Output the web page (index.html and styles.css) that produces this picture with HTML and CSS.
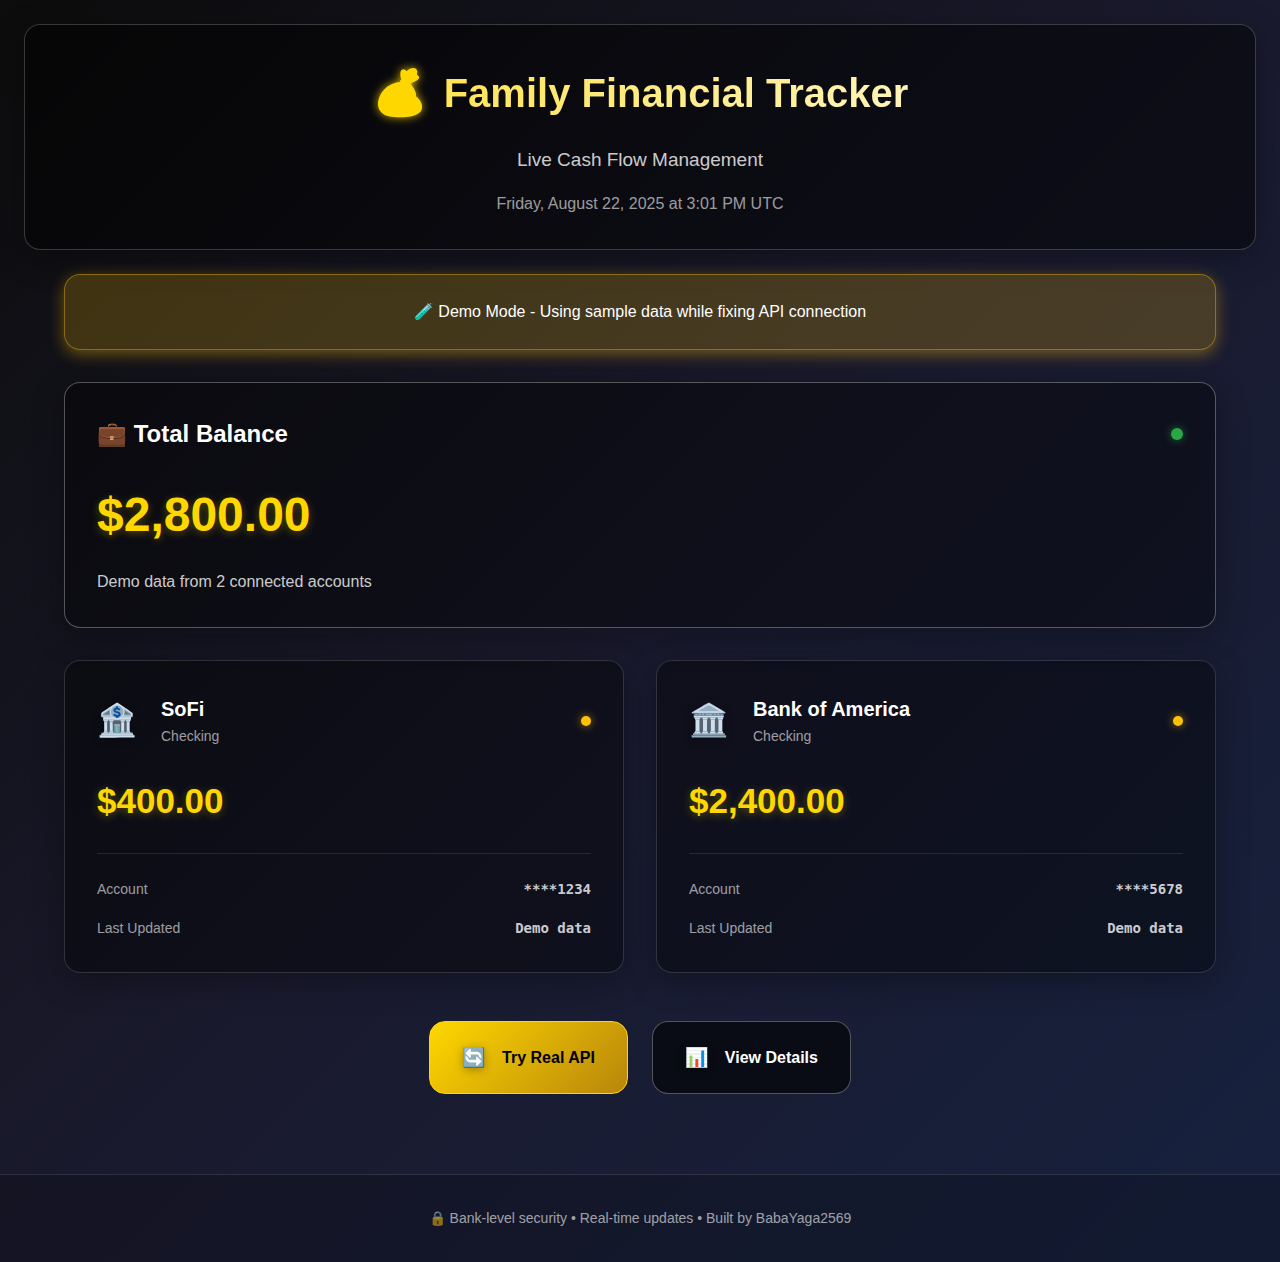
FILE: index.html
```html
<!DOCTYPE html>
<html lang="en">
<head>
<meta charset="utf-8">
<title>Family Financial Tracker</title>
<link rel="stylesheet" href="styles.css">
</head>
<body>
<header class="hero">
  <h1 class="title"><span class="bag">💰</span><span>Family Financial Tracker</span></h1>
  <p class="tagline">Live Cash Flow Management</p>
  <p class="date">Friday, August 22, 2025 at 3:01 PM UTC</p>
</header>
<main class="main">
  <div class="notice">🧪 Demo Mode - Using sample data while fixing API connection</div>
  <section class="card total">
    <div class="total-head"><h2>💼 Total Balance</h2><span class="dot ok"></span></div>
    <div class="amount big">$2,800.00</div>
    <p class="note">Demo data from 2 connected accounts</p>
  </section>
  <div class="accounts">
    <section class="card account">
      <div class="bank"><span class="bank-icon">🏦</span><div class="bank-name"><h3>SoFi</h3><p>Checking</p></div><span class="dot wait"></span></div>
      <div class="amount">$400.00</div>
      <dl class="details"><div><dt>Account</dt><dd>****1234</dd></div><div><dt>Last Updated</dt><dd>Demo data</dd></div></dl>
    </section>
    <section class="card account">
      <div class="bank"><span class="bank-icon">🏛️</span><div class="bank-name"><h3>Bank of America</h3><p>Checking</p></div><span class="dot wait"></span></div>
      <div class="amount">$2,400.00</div>
      <dl class="details"><div><dt>Account</dt><dd>****5678</dd></div><div><dt>Last Updated</dt><dd>Demo data</dd></div></dl>
    </section>
  </div>
  <div class="actions">
    <button class="btn primary" type="button"><span class="btn-icon">🔄</span>Try Real API</button>
    <button class="btn" type="button"><span class="btn-icon">📊</span>View Details</button>
  </div>
</main>
<footer class="footer"><p>🔒 Bank-level security • Real-time updates • Built by BabaYaga2569</p></footer>
</body>
</html>
```
FILE: styles.css
```css
* { box-sizing: border-box; margin: 0; padding: 0; }
body {
  min-height: 100vh;
  font-family: "Liberation Sans", Arial, sans-serif;
  font-size: 16px;
  line-height: 26px;
  color: #fff;
  background: linear-gradient(135deg, #0c0c0c 0%, #1a1a2e 50%, #16213e 100%);
}
.hero {
  margin: 24px;
  padding: 32px;
  text-align: center;
  border: 1px solid rgba(255, 255, 255, 0.2);
  border-radius: 16px;
  background: rgba(0, 0, 0, 0.5);
  box-shadow: 0 8px 32px rgba(0, 0, 0, 0.3);
}
.title {
  display: flex;
  justify-content: center;
  align-items: center;
  gap: 16px;
  margin-bottom: 16px;
  font-size: 40px;
  line-height: 72px;
  background: linear-gradient(135deg, #ffd700, #fff);
  -webkit-background-clip: text;
  background-clip: text;
  -webkit-text-fill-color: transparent;
}
.bag {
  font-size: 45px;
  background: #ffd700;
  -webkit-background-clip: text;
  background-clip: text;
  filter: drop-shadow(0 0 5px rgba(255, 215, 0, 0.8));
}
.tagline { margin-bottom: 16px; font-size: 19px; line-height: 30px; color: rgba(255, 255, 255, 0.8); }
.date { color: rgba(255, 255, 255, 0.6); }
.main { max-width: 1200px; margin: 0 auto; padding: 0 24px; }
.notice {
  padding: 24px;
  margin-bottom: 32px;
  text-align: center;
  border: 1px solid rgba(255, 193, 7, 0.4);
  border-radius: 16px;
  background: rgba(255, 193, 7, 0.2);
  box-shadow: 0 4px 16px rgba(255, 193, 7, 0.4);
}
.card {
  padding: 32px;
  border: 1px solid rgba(255, 255, 255, 0.15);
  border-radius: 16px;
  background: rgba(0, 0, 0, 0.4);
  box-shadow: 0 8px 32px rgba(0, 0, 0, 0.3);
}
.total { border-color: rgba(255, 255, 255, 0.3); margin-bottom: 32px; }
.total-head { display: flex; justify-content: space-between; align-items: center; margin-bottom: 24px; }
h2 { font-size: 24px; line-height: 38px; }
.dot { width: 10px; height: 10px; border-radius: 50%; }
.ok { width: 12px; height: 12px; background: #28a745; box-shadow: 0 0 8px rgba(40, 167, 69, 0.6); }
.wait { background: #ffc107; box-shadow: 0 0 8px rgba(255, 193, 7, 0.6); }
.amount { font-weight: bold; font-size: 35px; line-height: 56px; color: #ffd700; text-shadow: 0 2px 8px rgba(255, 215, 0, 0.3); }
.big { font-size: 48px; line-height: 76px; margin-bottom: 16px; }
.note { color: rgba(255, 255, 255, 0.8); }
.accounts { display: grid; grid-template-columns: repeat(2, 1fr); gap: 32px; }
.bank { display: flex; align-items: center; gap: 24px; margin-bottom: 24px; }
.bank-icon { width: 40px; font-size: 32px; line-height: 51px; filter: drop-shadow(0 2px 4px rgba(0, 0, 0, 0.3)); }
.bank-name { flex: 1; }
h3 { font-size: 20px; line-height: 32px; }
.bank-name p { font-size: 14px; line-height: 23px; color: rgba(255, 255, 255, 0.6); }
.account .amount { line-height: 57px; margin-bottom: 24px; }
.details { display: flex; flex-direction: column; gap: 16px; padding-top: 24px; border-top: 1px solid rgba(255, 255, 255, 0.1); }
.details div { display: flex; justify-content: space-between; font-size: 14px; line-height: 23px; }
dt { color: rgba(255, 255, 255, 0.6); }
dd { font-family: "DejaVu Sans Mono", monospace; font-weight: bold; color: rgba(255, 255, 255, 0.8); }
.actions { display: flex; justify-content: center; gap: 24px; margin: 48px 0; }
.btn {
  display: flex;
  align-items: center;
  gap: 16px;
  padding: 20px 32px;
  font: bold 16px/31px "Liberation Sans", Arial, sans-serif;
  color: #fff;
  border: 1px solid rgba(255, 255, 255, 0.3);
  border-radius: 16px;
  background: rgba(0, 0, 0, 0.6);
}
.primary { color: #000; border-color: #ffd700; background: linear-gradient(135deg, #ffd700, #b8860b); }
.btn-icon { font-size: 19px; filter: drop-shadow(0 2px 4px rgba(0, 0, 0, 0.3)); }
.footer {
  margin-top: 80px;
  padding: 32px;
  text-align: center;
  font-size: 14px;
  line-height: 23px;
  color: rgba(255, 255, 255, 0.6);
  border-top: 1px solid rgba(255, 255, 255, 0.12);
  background: rgba(0, 0, 0, 0.2);
}
```
